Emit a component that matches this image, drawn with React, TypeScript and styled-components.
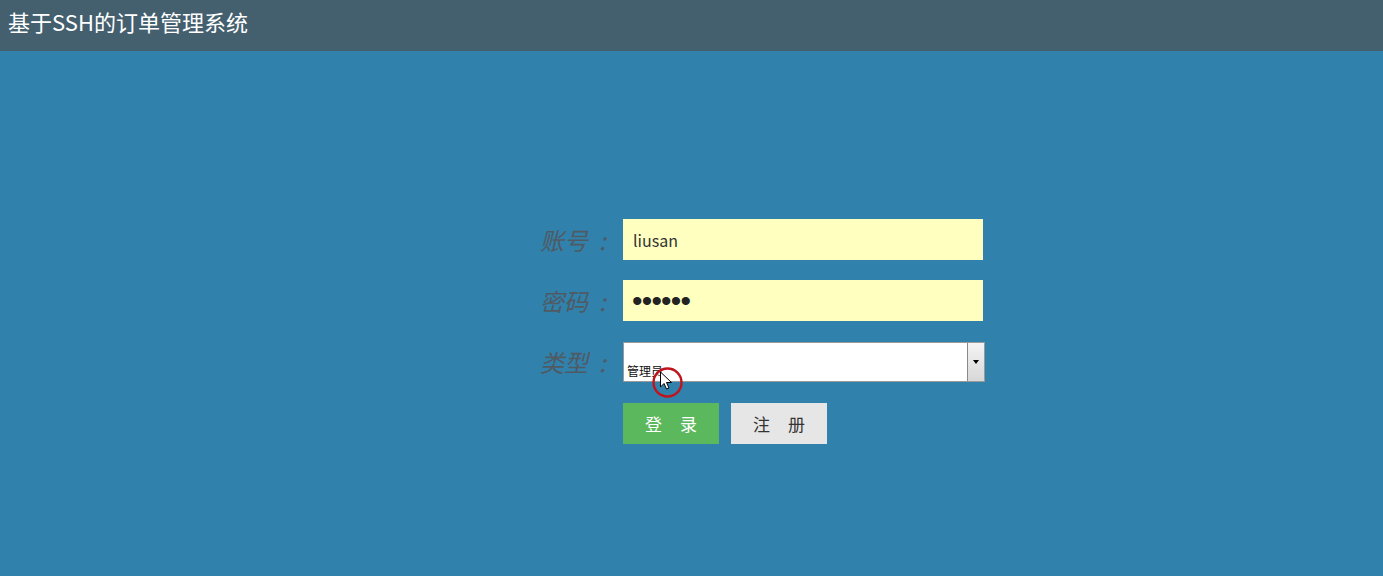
import React from "react";
import styled, { createGlobalStyle } from "styled-components";

const Global = createGlobalStyle`
  html, body { margin: 0; padding: 0; height: 100%; }
  body { background: #3181ad; font-family: "Noto Sans CJK SC", "Liberation Sans", sans-serif; }
  #root { min-height: 100vh; }
`;

const Page = styled.div`
  min-height: 576px;
  background: #3181ad;
  display: flex;
  flex-direction: column;
`;

const Header = styled.header`
  height: 51px;
  background: #44606f;
  display: flex;
  align-items: flex-start;
  padding: 5px 0 0 8px;
  box-sizing: border-box;
`;

const Title = styled.h1`
  margin: 0;
  font-weight: normal;
  font-size: 22px;
  line-height: 32px;
  color: #ffffff;
  font-family: "Noto Sans CJK SC", sans-serif;
`;

const Main = styled.main`
  display: flex;
  justify-content: flex-start;
  padding: 168px 0 0 520px;
`;

const Form = styled.form`
  display: grid;
  grid-template-columns: 93px auto;
  column-gap: 10px;
  row-gap: 20px;
  align-items: center;
`;

const Label = styled.label`
  font-style: italic;
  font-size: 24px;
  color: #4f5a63;
  text-align: right;
  font-family: "Noto Sans CJK SC", sans-serif;
  line-height: 41px;
  white-space: nowrap;
`;

const Colon = styled.span`
  display: inline-block;
  margin-left: 11px;
  width: 14px;
  text-align: left;
`;

const TextInput = styled.input`
  width: 360px;
  height: 41px;
  box-sizing: border-box;
  border: none;
  background: #ffffc0;
  padding: 0 10px;
  font-size: 16px;
  color: #333;
  font-family: "Noto Sans CJK SC", sans-serif;
  outline: none;
`;

const PasswordInput = styled(TextInput)`
  font-family: "Liberation Sans", sans-serif;
  font-size: 30px;
  letter-spacing: -0.8px;
  color: #222;
  padding-left: 9px;
`;

const SelectBox = styled.div`
  position: relative;
  width: 362px;
  height: 40px;
  box-sizing: border-box;
  background: #fff;
  border: 1px solid #9a9a9a;
  margin-top: 1px;
`;

const SelectText = styled.span`
  position: absolute;
  left: 3px;
  bottom: 2px;
  font-size: 12px;
  color: #111;
  font-family: "Noto Sans CJK SC", sans-serif;
  line-height: 16px;
`;

const DropButton = styled.div`
  position: absolute;
  right: 0;
  top: 0;
  bottom: 0;
  width: 16px;
  border-left: 1px solid #8a8a8a;
  background: linear-gradient(to bottom, #f4f4f4, #d8d8d8);
  display: flex;
  align-items: center;
  justify-content: center;
`;

const Arrow = styled.div`
  width: 0;
  height: 0;
  border-left: 3px solid transparent;
  border-right: 3px solid transparent;
  border-top: 4px solid #000;
`;

const Buttons = styled.div`
  display: flex;
  gap: 12px;
  grid-column: 2;
  margin-top: 1px;
`;

const Btn = styled.button<{ $primary?: boolean }>`
  width: 96px;
  height: 41px;
  border: none;
  padding: 0;
  font-size: 17px;
  font-family: "Noto Sans CJK SC", sans-serif;
  background: ${p => (p.$primary ? "#5cb85c" : "#e6e6e6")};
  color: ${p => (p.$primary ? "#ffffff" : "#333333")};
  display: flex;
  align-items: center;
  justify-content: center;
  gap: 18px;
  cursor: pointer;
`;

const CursorMark = styled.svg`
  position: absolute;
  left: 26px;
  top: 22px;
  pointer-events: none;
`;

export default function App() {
  return (
    <>
      <Global />
      <Page>
        <Header>
          <Title>基于SSH的订单管理系统</Title>
        </Header>
        <Main>
          <Form onSubmit={e => e.preventDefault()}>
            <Label>账号<Colon>:</Colon></Label>
            <TextInput defaultValue="liusan" />
            <Label>密码<Colon>:</Colon></Label>
            <PasswordInput type="password" defaultValue="123456" />
            <Label>类型<Colon>:</Colon></Label>
            <SelectBox>
              <SelectText>管理员</SelectText>
              <DropButton>
                <Arrow />
              </DropButton>
              <CursorMark width="36" height="36" viewBox="0 0 36 36">
                <circle cx="17.5" cy="17.5" r="14" fill="none" stroke="#c0141c" strokeWidth="2.4" />
                <path d="M10.5 7 L10.5 22 L14 18.5 L16.5 24 L19 23 L16.5 17.5 L21.5 17.5 Z" fill="#fff" stroke="#000" strokeWidth="1" strokeLinejoin="round" />
              </CursorMark>
            </SelectBox>
            <Buttons>
              <Btn $primary type="submit"><span>登</span><span>录</span></Btn>
              <Btn type="button"><span>注</span><span>册</span></Btn>
            </Buttons>
          </Form>
        </Main>
      </Page>
    </>
  );
}
